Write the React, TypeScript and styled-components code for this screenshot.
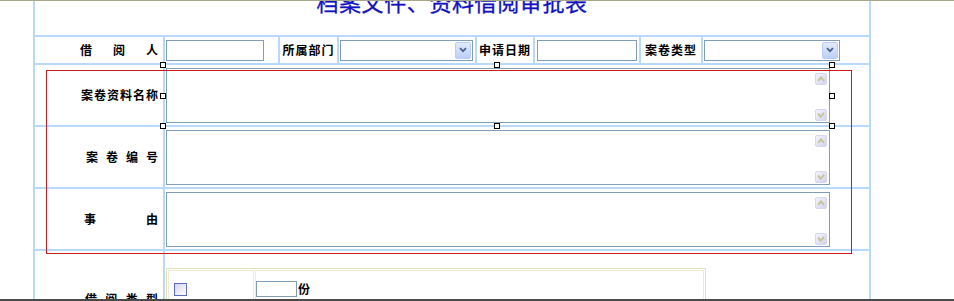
import React from "react";
import styled, { createGlobalStyle } from "styled-components";

const GlobalStyle = createGlobalStyle`
  html, body {
    margin: 0;
    padding: 0;
    background: #fff;
  }
  body {
    font-family: "Noto Sans CJK SC", "Noto Sans", sans-serif;
    overflow: hidden;
  }
`;

const Root = styled.div`
  position: relative;
  display: flow-root;
  height: 100vh;
  overflow: hidden;
`;

const Edge = styled.div<{ $side: "top" | "bottom" }>`
  position: fixed;
  left: 0;
  right: 0;
  ${(p) => (p.$side === "top" ? "top: 0;" : "bottom: 0;")}
  height: ${(p) => (p.$side === "top" ? 1 : 2)}px;
  background: ${(p) => (p.$side === "top" ? "#a7a78c" : "#4a4a4a")};
  z-index: 5;
`;

const Sheet = styled.div`
  display: grid;
  grid-template-columns: 128px 113px 57px 136px 56px 104px 60px 166px;
  grid-template-rows: 61px 26px 60px 60px 60px 96px;
  gap: 2px;
  padding: 2px;
  width: max-content;
  margin: -28px 0 0 33px;
  background: #b8d9fb;
`;

const Cell = styled.div<{ $span?: boolean; $pad?: number }>`
  background: #fff;
  display: flex;
  align-items: center;
  padding-left: ${(p) => p.$pad ?? 0}px;
  ${(p) => (p.$span ? "grid-column: 2 / -1;" : "")}
`;

const TitleCell = styled.div`
  grid-column: 1 / -1;
  background: #fff;
  padding-top: 16px;
  text-align: center;
  font-size: 22px;
  line-height: 22px;
  color: #1111c2;
  letter-spacing: 0.6px;
  -webkit-text-stroke: 0.3px #1111c2;
`;

const LabelCell = styled.div`
  background: #fff;
  display: flex;
  align-items: center;
  justify-content: flex-end;
  padding-right: 5px;
`;

const SmallLabelCell = styled.div`
  background: #fff;
  display: flex;
  align-items: center;
  justify-content: center;
`;

const LabelText = styled.span`
  font-size: 12px;
  line-height: 14px;
  font-weight: 700;
  color: #000;
  letter-spacing: 1px;
  white-space: nowrap;
`;

const Spread = styled.span<{ $w: number }>`
  display: flex;
  justify-content: space-between;
  width: ${(p) => p.$w}px;
  font-size: 12px;
  line-height: 14px;
  font-weight: 700;
  color: #000;
`;

const TextBox = styled.input<{ $w: number; $h?: number }>`
  box-sizing: border-box;
  width: ${(p) => p.$w}px;
  height: ${(p) => p.$h ?? 21}px;
  border: 1px solid #7f9db9;
  background: #fff;
  padding: 0 2px;
  margin: 0;
  font-size: 12px;
  outline: none;
`;

const FakeSelect = styled.div<{ $w: number }>`
  box-sizing: border-box;
  width: ${(p) => p.$w}px;
  height: 21px;
  border: 1px solid #7f9db9;
  background: #fff;
  display: flex;
  justify-content: flex-end;
  padding: 1px;
`;

const DropBtn = styled.div`
  box-sizing: border-box;
  width: 16px;
  border: 1px solid #b7cbf5;
  border-radius: 2px;
  background: linear-gradient(#e3ebfe, #bccff7);
  display: flex;
  align-items: center;
  justify-content: center;
`;

const AreaWrap = styled.div`
  position: relative;
  width: 664px;
  height: 55px;
`;

const Area = styled.textarea`
  box-sizing: border-box;
  display: block;
  width: 100%;
  height: 100%;
  margin: 0;
  border: 1px solid #7f9db9;
  resize: none;
  overflow: hidden;
  outline: none;
  font-size: 12px;
  background: #fff;
`;

const Knob = styled.div<{ $pos: "top" | "bottom" }>`
  position: absolute;
  right: 3px;
  ${(p) => (p.$pos === "top" ? "top: 5px;" : "bottom: 2px;")}
  box-sizing: border-box;
  width: 12px;
  height: 12px;
  border: 1px solid #d6d6ee;
  border-radius: 2px;
  background: linear-gradient(135deg, #f4f4fd, #d2d2f0);
  display: flex;
  align-items: center;
  justify-content: center;
`;

const Handle = styled.div`
  position: absolute;
  box-sizing: border-box;
  width: 6px;
  height: 6px;
  border: 1px solid #000;
  background: #fff;
  z-index: 3;
`;

const RedFrame = styled.div`
  position: absolute;
  left: 46px;
  top: 70px;
  width: 806px;
  height: 184px;
  box-sizing: border-box;
  border: 1px solid #cc1a1a;
  pointer-events: none;
  z-index: 2;
`;

const TypeCell = styled.div`
  grid-column: 2 / -1;
  background: #fff;
  padding: 17px 0 0 1px;
`;

const InnerTable = styled.div`
  box-sizing: border-box;
  width: 540px;
  display: grid;
  grid-template-columns: 86px 1fr;
  gap: 1px;
  padding: 1px;
  border: 1px solid #e3e1b8;
`;

const InnerCell = styled.div`
  box-sizing: border-box;
  height: 60px;
  border: 1px solid #ecead0;
  display: flex;
  align-items: flex-start;
  padding-top: 10px;
`;

const CheckWrap = styled.div`
  display: flex;
  align-items: center;
  height: 16px;
  padding-left: 5px;
`;

const Check = styled.span`
  box-sizing: border-box;
  width: 13px;
  height: 13px;
  border: 1px solid #5a6cc2;
  background: linear-gradient(135deg, #d4d4f2, #fff);
`;

const CopyRow = styled.div`
  display: flex;
  align-items: center;
  height: 16px;
`;

const Unit = styled.span`
  font-size: 12px;
  line-height: 14px;
  font-weight: 700;
  margin-left: 1px;
`;

function SpreadText({ text, w }: { text: string; w: number }) {
  return (
    <Spread $w={w}>
      {[...text].map((c, i) => (
        <span key={i}>{c}</span>
      ))}
    </Spread>
  );
}

function Select({ w }: { w: number }) {
  return (
    <FakeSelect $w={w}>
      <DropBtn>
        <svg width="8" height="6" viewBox="0 0 8 6">
          <path d="M1 1.2 L4 4.2 L7 1.2" stroke="#4a5f8a" strokeWidth="1.7" fill="none" />
        </svg>
      </DropBtn>
    </FakeSelect>
  );
}

const handleSpots = [
  [-3, -3],
  [331, -3],
  [666, -3],
  [-3, 28],
  [666, 28],
  [-3, 58],
  [331, 58],
  [666, 58],
];

function Memo({ selected }: { selected?: boolean }) {
  return (
    <AreaWrap>
      <Area />
      <Knob $pos="top">
        <svg width="8" height="6" viewBox="0 0 8 6">
          <path d="M1 5 L4 1.5 L7 5" stroke="#c6c28c" strokeWidth="1.8" fill="none" />
        </svg>
      </Knob>
      <Knob $pos="bottom">
        <svg width="8" height="6" viewBox="0 0 8 6">
          <path d="M1 1.5 L3.5 4.8 L7 0.8" stroke="#c6c28c" strokeWidth="1.8" fill="none" />
        </svg>
      </Knob>
      {selected &&
        handleSpots.map(([x, y], i) => (
          <Handle key={i} style={{ left: x - 3, top: y - 3 }} />
        ))}
    </AreaWrap>
  );
}

export default function App() {
  return (
    <Root>
      <GlobalStyle />
      <Edge $side="top" />
      <Sheet>
        <TitleCell>档案文件、资料借阅审批表</TitleCell>

        <LabelCell>
          <SpreadText text="借阅人" w={78} />
        </LabelCell>
        <Cell $pad={1}>
          <TextBox $w={98} />
        </Cell>
        <SmallLabelCell>
          <LabelText>所属部门</LabelText>
        </SmallLabelCell>
        <Cell $pad={1}>
          <Select w={133} />
        </Cell>
        <SmallLabelCell>
          <LabelText>申请日期</LabelText>
        </SmallLabelCell>
        <Cell $pad={2}>
          <TextBox $w={100} />
        </Cell>
        <SmallLabelCell>
          <LabelText>案卷类型</LabelText>
        </SmallLabelCell>
        <Cell $pad={1}>
          <Select w={136} />
        </Cell>

        <LabelCell>
          <SpreadText text="案卷资料名称" w={77} />
        </LabelCell>
        <Cell $span $pad={1}>
          <Memo selected />
        </Cell>

        <LabelCell>
          <SpreadText text="案卷编号" w={72} />
        </LabelCell>
        <Cell $span $pad={1}>
          <Memo />
        </Cell>

        <LabelCell>
          <SpreadText text="事由" w={74} />
        </LabelCell>
        <Cell $span $pad={1}>
          <Memo />
        </Cell>

        <LabelCell>
          <SpreadText text="借阅类型" w={73} />
        </LabelCell>
        <TypeCell>
          <InnerTable>
            <InnerCell>
              <CheckWrap>
                <Check />
              </CheckWrap>
            </InnerCell>
            <InnerCell>
              <CopyRow>
                <TextBox $w={41} $h={16} />
                <Unit>份</Unit>
              </CopyRow>
            </InnerCell>
          </InnerTable>
        </TypeCell>
      </Sheet>
      <RedFrame />
      <Edge $side="bottom" />
    </Root>
  );
}
